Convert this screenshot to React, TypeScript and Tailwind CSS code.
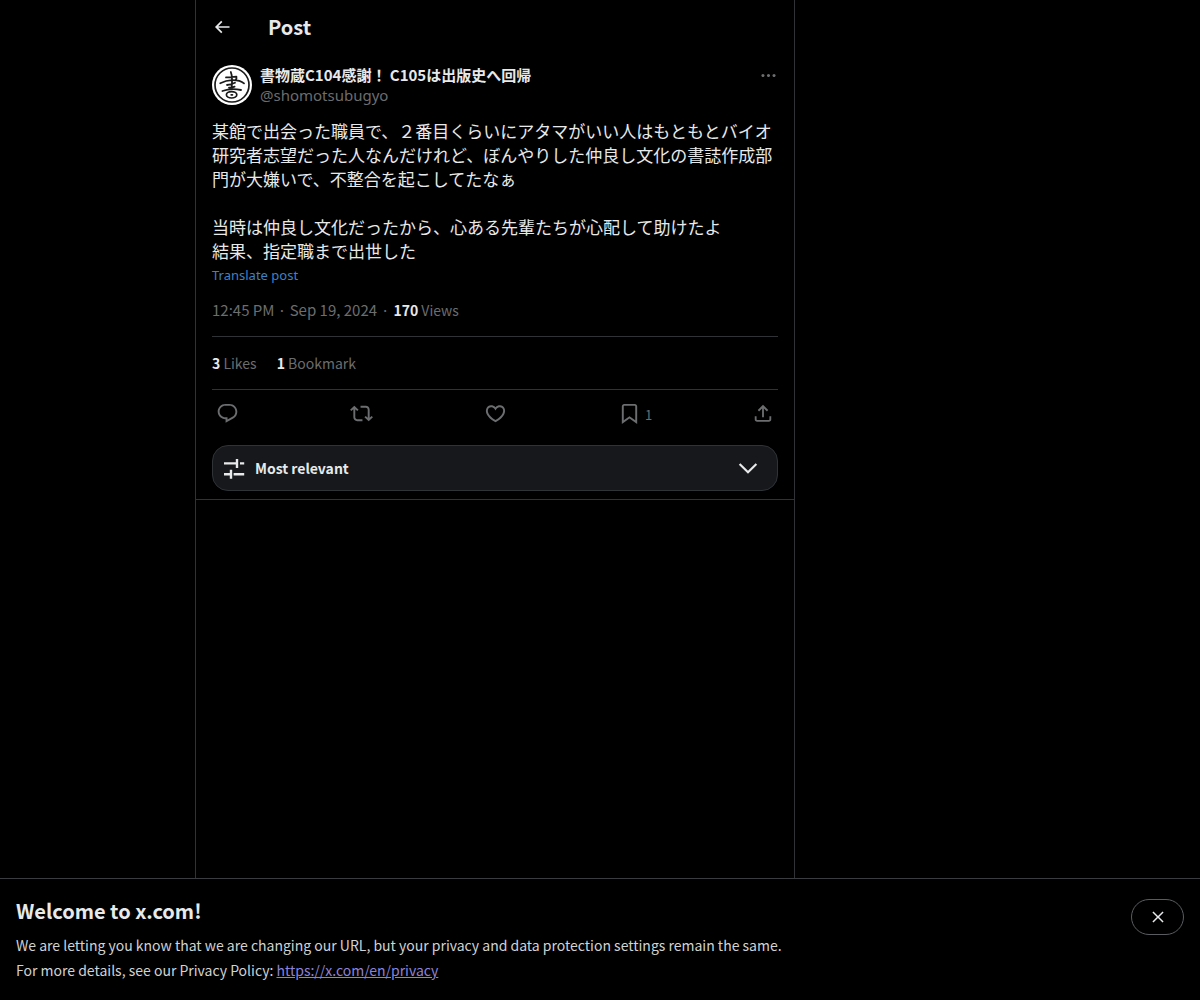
import type { ReactNode } from "react";

const icons = {
  back: "M7.414 13l5.043 5.04-1.414 1.42L3.586 12l7.457-7.46 1.414 1.42L7.414 11H21v2H7.414z",
  more: "M3 12c0-1.1.9-2 2-2s2 .9 2 2-.9 2-2 2-2-.9-2-2zm9 2c1.1 0 2-.9 2-2s-.9-2-2-2-2 .9-2 2 .9 2 2 2zm7 0c1.1 0 2-.9 2-2s-.9-2-2-2-2 .9-2 2 .9 2 2 2z",
  reply:
    "M1.751 10c0-4.42 3.584-8 8.005-8h4.366c4.49 0 8.129 3.64 8.129 8.13 0 2.96-1.607 5.68-4.196 7.11l-8.054 4.46v-3.69h-.067c-4.49.1-8.183-3.51-8.183-8.01zm8.005-6c-3.317 0-6.005 2.69-6.005 6 0 3.37 2.77 6.08 6.138 6.01l.351-.01h1.761v2.3l5.087-2.81c1.951-1.08 3.163-3.13 3.163-5.36 0-3.39-2.744-6.13-6.129-6.13H9.756z",
  repost:
    "M4.5 3.88l4.432 4.14-1.364 1.46L5.5 7.55V16c0 1.1.896 2 2 2H13v2H7.5c-2.209 0-4-1.79-4-4V7.55L1.432 9.48.068 8.02 4.5 3.88zM16.5 6H11V4h5.5c2.209 0 4 1.79 4 4v8.45l2.068-1.93 1.364 1.46-4.432 4.14-4.432-4.14 1.364-1.46 2.068 1.93V8c0-1.1-.896-2-2-2z",
  like: "M16.697 5.5c-1.222-.06-2.679.51-3.89 2.16l-.805 1.09-.806-1.09C9.984 6.01 8.526 5.44 7.304 5.5c-1.243.07-2.349.78-2.91 1.91-.552 1.12-.633 2.78.479 4.82 1.074 1.97 3.257 4.27 7.129 6.61 3.87-2.34 6.052-4.64 7.126-6.61 1.111-2.04 1.03-3.7.477-4.82-.561-1.13-1.666-1.84-2.908-1.91zm4.187 7.69c-1.351 2.48-4.001 5.12-8.379 7.67l-.503.3-.504-.3c-4.379-2.55-7.029-5.19-8.382-7.67-1.36-2.5-1.41-4.86-.514-6.67.887-1.79 2.647-2.91 4.601-3.01 1.651-.09 3.368.56 4.798 2.01 1.429-1.45 3.146-2.1 4.796-2.01 1.954.1 3.714 1.22 4.601 3.01.896 1.81.846 4.17-.514 6.67z",
  bookmark:
    "M4 4.5C4 3.12 5.119 2 6.5 2h11C18.881 2 20 3.12 20 4.5v18.44l-8-5.71-8 5.71V4.5zM6.5 4c-.276 0-.5.22-.5.5v14.56l6-4.29 6 4.29V4.5c0-.28-.224-.5-.5-.5h-11z",
  share:
    "M12 2.59l5.7 5.7-1.41 1.42L13 6.41V16h-2V6.41l-3.3 3.3-1.41-1.42L12 2.59zM21 15l-.02 3.51c0 1.38-1.12 2.49-2.5 2.49H5.5C4.11 21 3 19.88 3 18.5V15h2v3.5c0 .28.22.5.5.5h12.98c.28 0 .5-.22.5-.5L19 15h2z",
  sort: "M2 6.2h11.8V3h2.4v9h-2.4V8.6H2zM18 6.2h4.2v2.4H18zM2 17h5.8v-3.2h2.4v9H7.8v-3.4H2zM11.6 17h10.6v2.4H11.6z",
  chevron: "M3.543 8.96l1.414-1.42L12 14.59l7.043-7.05 1.414 1.42L12 17.41 3.543 8.96z",
  close:
    "M10.59 12L4.54 5.96l1.42-1.42L12 10.59l6.04-6.05 1.42 1.42L13.41 12l6.05 6.04-1.42 1.42L12 13.41l-6.04 6.05-1.42-1.42L10.59 12z",
};

const Icon = ({ name, className }: { name: keyof typeof icons; className: string }) => (
  <svg viewBox="0 0 24 24" fill="currentColor" aria-hidden="true" className={className}>
    <path d={icons[name]} />
  </svg>
);

// Seal-style avatar: brush strokes inside a ring
const Avatar = () => (
  <svg viewBox="0 0 40 40" className="size-10 shrink-0" role="img" aria-label="shomotsubugyo">
    <circle cx="20" cy="20" r="20" fill="#fff" />
    <g fill="none" stroke="#1a1a1a" strokeLinecap="round" strokeLinejoin="round">
      <circle cx="20" cy="20" r="17" strokeWidth="1.7" />
      <path
        d="M14 12.4Q19 12.4 24.4 11.6Q25 13.6 23.4 15.4M8.2 18.2Q14 15.4 20 15.2Q28 15 32 18.4M18.8 7Q20.8 12 19.6 22.6M15 20Q19 19.6 23 17.8M17 22.6Q20 22.8 22.6 21.6M10.4 26Q19 23 29 25"
        strokeWidth="1.8"
      />
      <ellipse cx="19.6" cy="29.8" rx="5.2" ry="3.2" strokeWidth="1.7" />
      <path d="M19.2 29.8H20.4" strokeWidth="1.8" />
    </g>
  </svg>
);

const Action = ({
  icon,
  label,
  children,
}: {
  icon: keyof typeof icons;
  label: string;
  children?: ReactNode;
}) => (
  <button type="button" aria-label={label} className="flex items-center">
    <Icon name={icon} className="size-[23px]" />
    {children}
  </button>
);

const Post = () => (
  <article className="px-4 pt-3">
    <div className="flex items-start gap-2">
      <Avatar />
      <div className="min-w-0 flex-1 text-[15px] leading-5">
        <div className="font-bold">書物蔵C104感謝！ C105は出版史へ回帰</div>
        <a
          href="#profile"
          className="block font-['Noto_Sans',sans-serif] text-[#6b6d6f]"
        >
          @shomotsubugyo
        </a>
      </div>
      <button type="button" aria-label="More" className="flex h-5 items-center text-[#6b6d6f]">
        <Icon name="more" className="size-[19px]" />
      </button>
    </div>

    <div className="mt-3.5 text-[17px] leading-6 whitespace-pre-wrap">
      {`某館で出会った職員で、２番目くらいにアタマがいい人はもともとバイオ研究者志望だった人なんだけれど、ぼんやりした仲良し文化の書誌作成部門が大嫌いで、不整合を起こしてたなぁ

当時は仲良し文化だったから、心ある先輩たちが心配して助けたよ
結果、指定職まで出世した`}
    </div>
    <button
      type="button"
      className="block font-['Noto_Sans',sans-serif] text-[13px] leading-6 text-[#3f82c4]"
    >
      Translate post
    </button>

    <div className="flex gap-1 pt-[13px] pb-4 text-[15px] leading-5 text-[#6b6d6f]">
      <a href="#time">12:45 PM · Sep 19, 2024</a>
      <span>·</span>
      <span className="text-sm leading-5">
        <b className="text-[#e7e9ea]">170</b> Views
      </span>
    </div>

    <div className="flex gap-5 border-y border-[#2f3336] py-4 text-sm leading-5 text-[#6b6d6f]">
      <a href="#likes">
        <b className="text-[#e7e9ea]">3</b> Likes
      </a>
      <span>
        <b className="text-[#e7e9ea]">1</b> Bookmark
      </span>
    </div>

    <div className="grid h-[47px] grid-cols-[1fr_1fr_1fr_1fr_22px] items-center px-1 text-[#6b6d6f]">
      <Action icon="reply" label="Reply" />
      <Action icon="repost" label="Repost" />
      <Action icon="like" label="Like" />
      <Action icon="bookmark" label="Bookmark">
        <span className="px-1 pt-0.5 text-[13px] leading-4">1</span>
      </Action>
      <Action icon="share" label="Share post" />
    </div>

    <button
      type="button"
      className="mt-2 mb-2 flex h-[46px] w-full items-center rounded-2xl border border-[#2f3336] bg-[#16181c] px-[9px] text-left font-bold"
    >
      <Icon name="sort" className="size-6" />
      <span className="ml-[9px] flex-1 text-sm">Most relevant</span>
      <Icon name="chevron" className="mr-[7px] size-[26px]" />
    </button>
  </article>
);

const Banner = () => (
  <section className="flex items-start justify-between border-t border-[#3a3d40] px-4 pt-5 pb-[17px]">
    <div>
      <h2 className="text-xl leading-6 font-bold">Welcome to x.com!</h2>
      <p className="mt-2.5 text-sm leading-[25px] text-[#d0d2d3]">
        We are letting you know that we are changing our URL, but your privacy
        and data protection settings remain the same.
        <br />
        For more details, see our Privacy Policy:{" "}
        <a href="#privacy" className="text-[#8e82d8] underline">
          https://x.com/en/privacy
        </a>
      </p>
    </div>
    <button
      type="button"
      aria-label="Close"
      className="flex h-9 w-[53px] shrink-0 items-center justify-center rounded-full border border-[#5a5d60]"
    >
      <Icon name="close" className="size-[18px]" />
    </button>
  </section>
);

const App = () => {
  return (
    <div
      lang="ja"
      className="flex min-h-screen flex-col bg-black font-['Noto_Sans_CJK_JP',sans-serif] text-[#e7e9ea]"
    >
      <div className="grid flex-1 grid-cols-[195fr_minmax(0,600px)_405fr]">
        <main className="col-start-2 border-x border-[#2f3336]">
          <header className="flex h-[53px] items-center px-4">
            <button type="button" aria-label="Back" className="w-14">
              <Icon name="back" className="size-5" />
            </button>
            <h1 className="text-xl leading-6 font-bold">Post</h1>
          </header>
          <div className="border-b border-[#2f3336]">
            <Post />
          </div>
        </main>
      </div>
      <Banner />
    </div>
  );
};

export default App;
